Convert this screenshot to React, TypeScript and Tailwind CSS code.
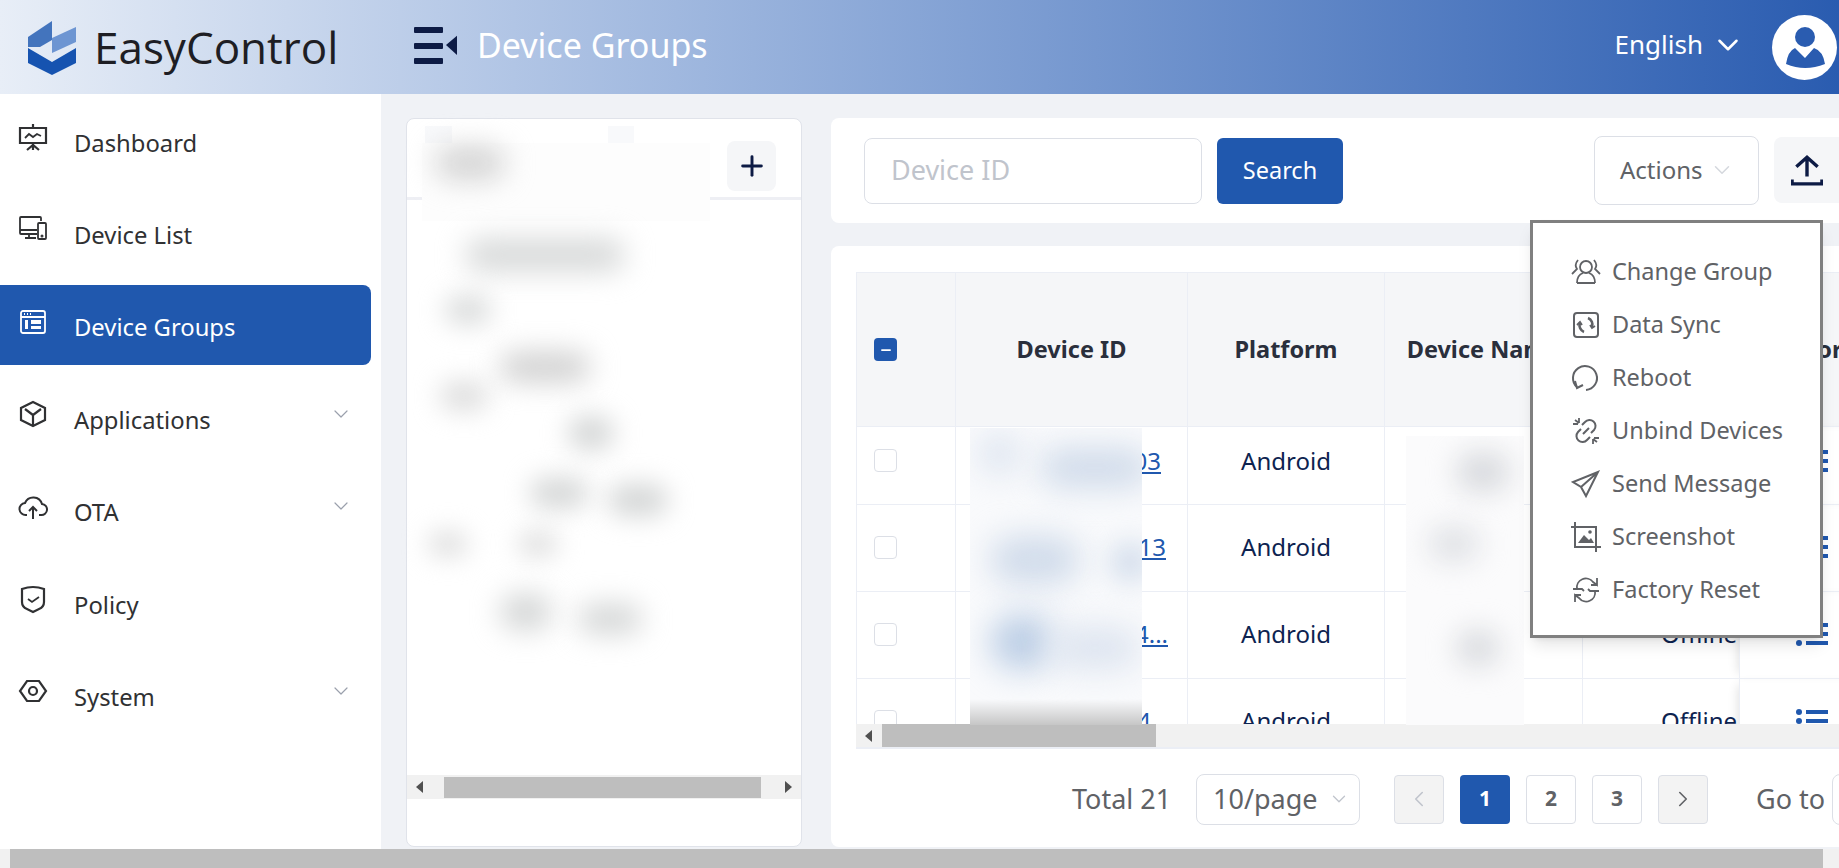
import { ChevronDown, ChevronLeft, ChevronRight, Minus, Plus } from "lucide-react";
import type { ReactNode } from "react";

const Svg = ({ children, className }: { children: ReactNode; className: string }) => (
  <svg viewBox="0 0 30 30" fill="none" stroke="currentColor" strokeWidth="1.8" className={className}>
    {children}
  </svg>
);

const Logo = () => (
  <svg viewBox="0 0 48 55" className="h-[55px] w-[48px]">
    <path d="M0 17 24 1v19L12 27H0z" fill="#4374bd" />
    <path d="M24 18 48 7v15L24 33z" fill="#6d95d2" />
    <path d="M0 28 24 42 48 28v15L24 55 0 43z" fill="#1653b0" />
  </svg>
);

const menuIcons: Record<string, ReactNode> = {
  Dashboard: (
    <>
      <path d="M2 6h26v15H2zM15 2v4M15 21v7M9 28l6-5 6 5" strokeWidth="2.200" />
      <path d="M7 16l4-4 4 3 4-3 4 2" />
    </>
  ),
  "Device List": (
    <>
      <path d="M23 7V4a1 1 0 0 0-1-1H3a1 1 0 0 0-1 1v15a1 1 0 0 0 1 1h16M2 16h17M11 20v4M7 24h11" />
      <rect x="20" y="9" width="8" height="16" rx="1" />
      <circle cx="24" cy="22" r=".6" />
    </>
  ),
  "Device Groups": (
    <>
      <rect x="3" y="4" width="24" height="22" rx="2" />
      <path d="M3 10h24M6 7h1M9 7h1M12 7h1" />
      <path d="M7 13h3v9H7zM13 13h10v4H13zM13 19h10v3H13z" fill="currentColor" stroke="none" />
    </>
  ),
  Applications: (
    <>
      <path d="M15 3 27 9v12L15 27 3 21V9z" strokeWidth="2.200" />
      <path d="M7 10l8 6 8-6M15 16v10" strokeWidth="2.200" />
    </>
  ),
  OTA: (
    <>
      <path d="M9 23H8a6 6 0 0 1-1-12 9 9 0 0 1 17 1 5.500 5.500 0 0 1-1 11h-2" strokeWidth="2" />
      <path d="M15 27V15M11 19l4-4 4 4" strokeWidth="2" />
    </>
  ),
  Policy: (
    <>
      <path d="M4 5q11-4 22 0v13q0 5-5 7l-6 3-6-3q-5-2-5-7z" strokeWidth="2.200" />
      <path d="M10 15l4 3 7-5" />
    </>
  ),
  System: (
    <>
      <path d="M9 5h12l7 10-7 10H9L2 15z" strokeWidth="2.200" />
      <circle cx="15" cy="15" r="4" strokeWidth="2.200" />
    </>
  ),
};

const actionIcons: Record<string, ReactNode> = {
  "Change Group": (
    <>
      <circle cx="15" cy="10" r="6" />
      <path d="M6 26q0-8 6-10M24 26q0-8-6-10M6 26h18M7 3Q3 8 6 12L1 17M23 3q4 5 1 9l5 5" />
    </>
  ),
  "Data Sync": (
    <>
      <rect x="3" y="3" width="24" height="24" rx="3" strokeWidth="2" />
      <path d="M17 8a7 7 0 0 1 4 9M13 22a7 7 0 0 1-4-9" strokeWidth="2.600" />
      <path d="M19 15l2 3 3-2M6 15l3-3 2 3" strokeWidth="1.800" />
    </>
  ),
  Reboot: (
    <>
      <path d="M6 24A12 12 0 1 1 15 27" strokeWidth="2" />
      <path d="M4 18l2 7 6-3" strokeWidth="2" />
    </>
  ),
  "Unbind Devices": (
    <>
      <path d="M11 9l3-3a5.500 5.500 0 0 1 9 8l-3 3M19 21l-3 3a5.500 5.500 0 0 1-9-8l3-3M12 18l6-6" strokeWidth="2" />
      <path d="M8 2v5M2 8h5M22 28v-5M28 22h-5M4 4l4 3M26 26l-4-3" />
    </>
  ),
  "Send Message": <path d="M27 3 2 13l8 5 5 9zM10 18 27 3" strokeWidth="2" />,
  Screenshot: (
    <>
      <path d="M4 0v25h26M0 5h25v25" strokeWidth="2" />
      <path d="M7 21l6-8 5 5 2-2 3 5z" fill="currentColor" stroke="none" />
      <circle cx="19" cy="10" r="1.800" fill="currentColor" stroke="none" />
    </>
  ),
  "Factory Reset": (
    <>
      <path d="M6 14a9 9 0 0 1 16-7l4 3V3M26 10h-6" />
      <path d="M24 16a9 9 0 0 1-16 7l-4-3v7M4 20h6" />
      <path d="M2 14h9l2 2M28 16h-9l-2-2" />
    </>
  ),
};

const sidebar = ["Dashboard", "Device List", "Device Groups", "Applications", "OTA", "Policy", "System"];
const withCaret = ["Applications", "OTA", "System"];

const rows = [
  { id: "03", h: "h-[78px]", lift: "pb-[10px]", link: "pr-[26px]" },
  { id: "13", h: "h-[87px]", lift: "pb-[2px]", link: "pr-[21px]" },
  { id: "4...", h: "h-[87px]", lift: "pb-[2px]", link: "pr-[19px]" },
  { id: "4", h: "h-[87px]", lift: "pb-[2px]", link: "pr-[36px]" },
];

const ScrollArrow = ({ dir }: { dir: "l" | "r" }) => (
  <span
    className={
      dir === "l"
        ? "block h-0 w-0 border-y-[6px] border-r-[7px] border-y-transparent border-r-[#505050]"
        : "block h-0 w-0 border-y-[6px] border-l-[7px] border-y-transparent border-l-[#505050]"
    }
  />
);

export default function App() {
  return (
    <div className="relative flex h-[868px] w-[1839px] flex-col overflow-hidden bg-[#f0f2f6] font-['Noto_Sans',sans-serif]">
      {/* header */}
      <header className="flex h-[94px] shrink-0 items-center bg-linear-to-r from-[#e8eef7] to-[#2a5cb0]">
        <div className="ml-[28px]">
          <Logo />
        </div>
        <span className="ml-[18px] w-[319px] text-[44px] leading-none text-[#1e1e24] font-['Open_Sans',sans-serif]">
          EasyControl
        </span>
        <svg viewBox="0 0 44 37" className="-mt-[4px] h-[37px] w-[44px]" fill="#0d1b45">
          <rect x="1" width="29" height="6" rx="1" />
          <rect x="1" y="16" width="29" height="6" rx="1" />
          <rect x="1" y="31" width="29" height="6" rx="1" />
          <path d="M45 8v21L33 18z" />
        </svg>
        <span className="-mt-[4px] ml-[20px] text-[34px] leading-none text-white">Device Groups</span>
        <span className="-mt-[6px] ml-auto text-[26px] leading-none text-white">English</span>
        <ChevronDown className="-mt-[4px] ml-[8px] h-[34px] w-[34px] text-white" strokeWidth={1.8} />
        <div className="ml-[27px] mr-[2px] flex h-[65px] w-[65px] items-center justify-center overflow-hidden rounded-full bg-white">
          <svg viewBox="0 0 65 65" className="h-[65px] w-[65px]" fill="#2a5cb0">
            <circle cx="33" cy="22" r="10" />
            <path d="M23 33l10 10 9-10q9 3 11 16-20 8-39 0 2-13 9-16z" />
          </svg>
        </div>
      </header>

      <div className="flex min-h-0 flex-1">
        {/* sidebar */}
        <aside className="flex w-[381px] shrink-0 flex-col gap-[12.4px] bg-white pt-[6px] pr-[10px]">
          {sidebar.map((name) => {
            const active = name === "Device Groups";
            return (
              <div
                key={name}
                className={
                  active
                    ? "flex h-[80px] items-center rounded-r-lg bg-[#2058ae] pl-[18px] text-white"
                    : "flex h-[80px] items-center pl-[18px] text-[#303133]"
                }
              >
                <Svg className="-mt-[6px] h-[30px] w-[30px]">{menuIcons[name]}</Svg>
                <span className="ml-[26px] pt-[7px] text-[23.800px] leading-none">{name}</span>
                {withCaret.includes(name) && (
                  <ChevronDown className="ml-auto mr-[18px] -mt-[7px] h-[24px] w-[24px] text-[#9aa0ac]" strokeWidth={1.2} />
                )}
              </div>
            );
          })}
        </aside>

        <main className="flex min-w-0 flex-1 gap-[29px] pt-[24px] pb-[2px] pl-[25px]">
          {/* tree card */}
          <section className="flex h-[729px] w-[396px] shrink-0 flex-col overflow-hidden rounded-lg border border-[#e0e3ea] bg-white">
            <div className="flex h-[81px] shrink-0 items-start justify-end border-b-[3px] border-[#eeeff4] pt-[22px] pr-[25px]">
              <div className="flex h-[50px] w-[49px] items-center justify-center rounded-lg bg-[#f5f6f8]">
                <Plus className="h-[32px] w-[32px] text-[#0d1b45]" strokeWidth={2.2} />
              </div>
            </div>
            <div className="flex-1" />
            <div className="mb-[47px] flex h-[24px] items-center bg-[#f1f1f1]">
              <span className="ml-[9px] flex w-[28px]">
                <ScrollArrow dir="l" />
              </span>
              <div className="h-[21px] w-[317px] bg-[#bebebe]" />
              <span className="ml-[24px] flex">
                <ScrollArrow dir="r" />
              </span>
            </div>
          </section>

          <div className="flex min-w-0 flex-1 flex-col gap-[23px]">
            {/* toolbar */}
            <section className="flex h-[105px] shrink-0 items-center overflow-hidden rounded-l-lg bg-white pl-[33px]">
              <div className="flex h-[66px] w-[338px] items-center rounded-lg border border-[#dcdfe6] pl-[26px] text-[27px] text-[#c0c4cc]">
                Device ID
              </div>
              <button className="ml-[15px] h-[66px] w-[126px] rounded-md bg-[#2058ae] text-[23.500px] text-white">Search</button>
              <div className="ml-auto flex h-[69px] w-[165px] items-center rounded-lg border border-[#dcdfe6] pb-[2px] pl-[25px] text-[24px] text-[#606266]">
                Actions
                <ChevronDown className="ml-[6px] h-[26px] w-[26px] text-[#d5d8de]" strokeWidth={1.4} />
              </div>
              <div className="ml-[15px] -mt-[2px] flex h-[66px] w-[65px] items-center justify-center rounded-l-lg bg-[#f5f6f8]">
                <svg viewBox="0 0 30 30" className="h-[32px] w-[32px]" fill="none" stroke="#0d1b45" strokeWidth="3.200">
                  <path d="M15 21V3M5 12l10-9 10 9" />
                  <path d="M1 24v4h28v-4" />
                </svg>
              </div>
            </section>

            {/* table card */}
            <section className="flex h-[601px] shrink-0 flex-col overflow-hidden rounded-l-lg bg-white pt-[26px] pl-[25px]">
              <div className="h-[452px] overflow-hidden">
                <table className="w-[1100px] table-fixed border-collapse text-center text-[24px] text-[#0d2350]">
                  <thead>
                    <tr className="h-[154px] bg-[#f5f6f8] text-[23.500px] font-bold text-[#2a2f3c]">
                      <th className="w-[99px] border border-[#ebeef5] pl-[17px] text-left">
                        <span className="flex h-[23px] w-[23px] items-center justify-center rounded bg-[#2058ae]">
                          <Minus className="h-[14px] w-[14px] text-white" strokeWidth={3} />
                        </span>
                      </th>
                      <th className="w-[232px] border border-[#ebeef5]">Device ID</th>
                      <th className="w-[197px] border border-[#ebeef5]">Platform</th>
                      <th className="w-[198px] border border-[#ebeef5] whitespace-nowrap">Device Name</th>
                      <th className="w-[157px] border border-[#ebeef5]">Status</th>
                      <th className="border border-[#ebeef5] pl-[8px] text-left whitespace-nowrap shadow-[-8px_0_10px_-6px_rgba(0,0,0,0.12)]">Monitor</th>
                    </tr>
                  </thead>
                  <tbody>
                    {rows.map((row) => (
                      <tr key={row.id} className={row.h}>
                        <td className={`border border-[#ebeef5] pl-[17px] text-left ${row.lift}`}>
                          <span className="block h-[23px] w-[23px] rounded border border-[#dcdfe6] bg-white" />
                        </td>
                        <td className={`border border-[#ebeef5] text-right ${row.link} ${row.lift}`}>
                          <span className="text-[#2058ae] underline">{row.id}</span>
                        </td>
                        <td className={`border border-[#ebeef5] ${row.lift}`}>Android</td>
                        <td className="border border-[#ebeef5]" />
                        <td className={`border border-[#ebeef5] pl-[78px] text-left ${row.lift}`}>Offline</td>
                        <td className={`border border-[#ebeef5] pl-[56px] text-left shadow-[-8px_0_10px_-6px_rgba(0,0,0,0.12)] ${row.lift}`}>
                          <svg viewBox="0 0 32 24" className="h-[24px] w-[32px]" fill="#2058ae">
                            <circle cx="3" cy="3" r="3" />
                            <circle cx="3" cy="12" r="3" />
                            <circle cx="3" cy="21" r="3" />
                            <rect x="10" y="1" width="22" height="4" />
                            <rect x="10" y="10" width="22" height="4" />
                            <rect x="10" y="19" width="22" height="4" />
                          </svg>
                        </td>
                      </tr>
                    ))}
                  </tbody>
                </table>
              </div>
              {/* table scrollbar */}
              <div className="flex h-[23px] shrink-0 items-center bg-[#f1f1f1]">
                <span className="ml-[9px] flex w-[17px]">
                  <ScrollArrow dir="l" />
                </span>
                <div className="h-[23px] w-[274px] bg-[#bebebe]" />
              </div>
              <div className="h-[2px] shrink-0 bg-[#ebeef5]" />

              {/* pagination */}
              <div className="flex flex-1 items-center pt-[2px] pl-[216px] text-[27px] text-[#606266]">
                <span className="w-[124px] shrink-0">Total 21</span>
                <div className="flex h-[51px] w-[164px] shrink-0 items-center rounded-lg border border-[#dcdfe6] pl-[16px]">
                  10/page
                  <ChevronDown className="ml-[10px] h-[22px] w-[22px] text-[#c0c4cc]" strokeWidth={1.4} />
                </div>
                <div className="ml-[34px] flex shrink-0 gap-[16px] font-bold">
                  <span className="flex h-[49px] w-[50px] items-center justify-center rounded border border-[#dcdfe6] bg-[#f3f3f3] text-[#c0c4cc]">
                    <ChevronLeft className="h-[26px] w-[26px]" strokeWidth={1.5} />
                  </span>
                  <span className="flex h-[49px] w-[50px] items-center justify-center rounded bg-[#2058ae] text-[21px] text-white">1</span>
                  <span className="flex h-[49px] w-[50px] items-center justify-center rounded border border-[#dcdfe6] text-[21px]">2</span>
                  <span className="flex h-[49px] w-[50px] items-center justify-center rounded border border-[#dcdfe6] text-[21px]">3</span>
                  <span className="flex h-[49px] w-[50px] items-center justify-center rounded border border-[#dcdfe6] bg-[#f3f3f3]">
                    <ChevronRight className="h-[26px] w-[26px]" strokeWidth={1.5} />
                  </span>
                </div>
                <span className="ml-[48px] shrink-0">Go to</span>
                <span className="ml-[7px] h-[51px] w-[60px] shrink-0 rounded-lg border border-[#dcdfe6]" />
              </div>
            </section>
          </div>
        </main>
      </div>

      {/* page scrollbar */}
      <div className="h-[19px] shrink-0 bg-[#f1f1f1] pl-[10px] pr-[16px]">
        <div className="h-full bg-[#bebebe]" />
      </div>

      {/* blurred tree names */}
      <div className="absolute top-[126px] left-[425px] h-[17px] w-[27px] bg-[#f8f9fb]" />
      <div className="absolute top-[126px] left-[608px] h-[17px] w-[26px] bg-[#f8f9fb]" />
      <div className="absolute top-[143px] left-[422px] h-[78px] w-[288px] bg-[#fdfdfd]" />
      <div className="absolute top-[146px] left-[435px] h-[34px] w-[70px] rounded-full bg-[#d4d4d4] blur-[14px]" />
      <div className="absolute top-[238px] left-[465px] h-[34px] w-[160px] rounded-full bg-[#d8dada] blur-[14px]" />
      <div className="absolute top-[296px] left-[445px] h-[28px] w-[46px] rounded-full bg-[#d8dada] blur-[13px]" />
      <div className="absolute top-[352px] left-[500px] h-[30px] w-[90px] rounded-full bg-[#d0d0d0] blur-[14px]" />
      <div className="absolute top-[382px] left-[440px] h-[28px] w-[48px] rounded-full bg-[#dcdcdc] blur-[13px]" />
      <div className="absolute top-[416px] left-[568px] h-[34px] w-[46px] rounded-full bg-[#d4d6d6] blur-[13px]" />
      <div className="absolute top-[478px] left-[530px] h-[30px] w-[58px] rounded-full bg-[#d4d6d6] blur-[13px]" />
      <div className="absolute top-[484px] left-[608px] h-[32px] w-[60px] rounded-full bg-[#d4d6d6] blur-[13px]" />
      <div className="absolute top-[531px] left-[428px] h-[26px] w-[40px] rounded-full bg-[#e0e0e0] blur-[12px]" />
      <div className="absolute top-[531px] left-[518px] h-[26px] w-[40px] rounded-full bg-[#e0e0e0] blur-[12px]" />
      <div className="absolute top-[594px] left-[500px] h-[36px] w-[52px] rounded-full bg-[#d4d6d6] blur-[14px]" />
      <div className="absolute top-[604px] left-[578px] h-[30px] w-[64px] rounded-full bg-[#d4d6d6] blur-[14px]" />

      {/* blurred device ids */}
      <div className="absolute top-[428px] left-[970px] h-[297px] w-[172px] overflow-hidden bg-[#f9fafc]">
        <div className="absolute top-[20px] left-[70px] h-[40px] w-[110px] rounded-full bg-[#d0dbea] blur-[16px]" />
        <div className="absolute top-[4px] left-[8px] h-[44px] w-[44px] rounded-full bg-[#dee5f0] blur-[16px]" />
        <div className="absolute top-[108px] left-[20px] h-[48px] w-[90px] rounded-full bg-[#d0dbea] blur-[16px]" />
        <div className="absolute top-[114px] left-[140px] h-[40px] w-[40px] rounded-full bg-[#d0dbea] blur-[14px]" />
        <div className="absolute top-[186px] left-[20px] h-[56px] w-[64px] rounded-full bg-[#bccee5] blur-[16px]" />
        <div className="absolute top-[198px] left-[80px] h-[44px] w-[90px] rounded-full bg-[#dee5f0] blur-[16px]" />
        <div className="absolute bottom-0 left-0 h-[26px] w-full bg-linear-to-b from-transparent to-[#c6c6c6]" />
      </div>

      {/* blurred device names */}
      <div className="absolute top-[436px] left-[1406px] h-[289px] w-[118px] overflow-hidden bg-[#fbfbfc]">
        <div className="absolute top-[16px] left-[50px] h-[40px] w-[54px] rounded-full bg-[#d8dade] blur-[14px]" />
        <div className="absolute top-[90px] left-[22px] h-[36px] w-[52px] rounded-full bg-[#e0e2e6] blur-[14px]" />
        <div className="absolute top-[194px] left-[50px] h-[36px] w-[44px] rounded-full bg-[#d8dade] blur-[14px]" />
      </div>

      {/* actions dropdown */}
      <div className="absolute top-[214px] left-[1667px] h-[12px] w-[12px] rotate-45 bg-white" />
      <div className="absolute top-[220px] left-[1530px] h-[418px] w-[293px] border-[3px] border-[#808080] bg-white pt-[22px] pl-[38px] shadow-lg">
        {Object.keys(actionIcons).map((name) => (
          <div key={name} className="flex h-[53px] items-center text-[23.500px] text-[#606266]">
            <Svg className="h-[30px] w-[30px] shrink-0">{actionIcons[name]}</Svg>
            <span className="ml-[11px]">{name}</span>
          </div>
        ))}
      </div>
    </div>
  );
}
